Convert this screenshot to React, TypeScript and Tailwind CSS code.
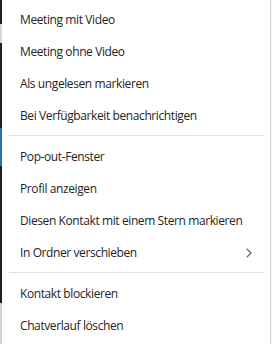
import React from "react";

const groups: string[][] = [
  ["Meeting mit Video", "Meeting ohne Video", "Als ungelesen markieren", "Bei Verfügbarkeit benachrichtigen"],
  ["Pop-out-Fenster", "Profil anzeigen", "Diesen Kontakt mit einem Stern markieren", "In Ordner verschieben"],
  ["Kontakt blockieren", "Chatverlauf löschen"],
];

function Row({ label }: { label: string }) {
  const sub = label === "In Ordner verschieben";
  return (
    <div className="h-[32px] flex items-center pl-[18px] pr-[18px] text-[#242424]">
      <span className="flex-1 whitespace-nowrap">{label}</span>
      {sub && (
        <svg width="6" height="10" viewBox="0 0 6 10" className="text-[#616161] shrink-0">
          <path d="M1 1l4 4-4 4" fill="none" stroke="currentColor" strokeWidth="1.1" strokeLinecap="round" strokeLinejoin="round" />
        </svg>
      )}
    </div>
  );
}

export default function App() {
  return (
    <div className="w-[272px] h-[344px] flex overflow-hidden bg-white" style={{ fontFamily: '"Open Sans", "Noto Sans", sans-serif' }}>
      <div className="w-[2px] shrink-0 flex flex-col">
        <div className="h-[24px] bg-[#1f1f1f]" />
        <div className="h-[19px] bg-[#d9d9d9]" />
        <div className="h-[85px] bg-[#1f1f1f]" />
        <div className="h-[38px] bg-[#2a6fb0]" />
        <div className="h-[137px] bg-[#1f1f1f]" />
        <div className="flex-1 bg-[#d0d0d0]" />
      </div>
      <div className="flex-1 min-w-0 flex flex-col pt-[4px] text-[12px] tracking-[-0.4px] border-r border-[#d6d6d6]">
        {groups.map((g, i) => (
          <div key={i} className="flex flex-col">
            {i > 0 && <div className="h-[1px] bg-[#e0e0e0] ml-[7px] mr-[6px] mt-[3px] mb-[5px]" />}
            {g.map((l) => (
              <Row key={l} label={l} />
            ))}
          </div>
        ))}
      </div>
      <div className="w-[1px] shrink-0 bg-[#f3f3f3]" />
    </div>
  );
}
